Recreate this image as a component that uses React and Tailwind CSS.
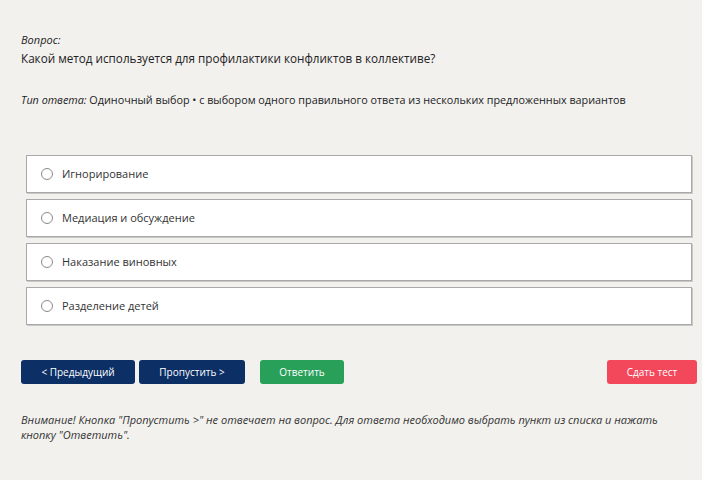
import React, { useState } from "react";

const options = [
  "Игнорирование",
  "Медиация и обсуждение",
  "Наказание виновных",
  "Разделение детей",
];

const App = () => {
  const [selected, setSelected] = useState(null);

  return (
    <div
      className="min-h-screen w-full bg-[#f2f1ee] text-[#222] pl-[21px] pr-[5px] pt-[33px]"
      style={{ fontFamily: '"Open Sans", "Noto Sans", sans-serif' }}
    >
      {/* Question */}
      <div className="text-[11px] italic leading-[14px]">Вопрос:</div>
      <div className="text-[11.7px] leading-[18px] mt-[2px]">
        Какой метод используется для профилактики конфликтов в коллективе?
      </div>

      <div className="text-[10.8px] leading-[14px] mt-[26px]">
        <span className="italic">Тип ответа:</span> Одиночный выбор • с выбором одного правильного ответа из нескольких предложенных вариантов
      </div>

      {/* Options */}
      <div className="flex flex-col gap-[6px] mt-[48px] ml-[5px] mr-[5px]">
        {options.map((opt, i) => (
          <label
            key={i}
            className="flex items-center h-[38px] bg-white border border-[#a9a9a9] shadow-[1px_1px_0_#c8c8c8] pl-[14px] cursor-pointer"
            onClick={() => setSelected(i)}
          >
            <span className="w-[12px] h-[12px] rounded-full border border-[#8a8a8a] bg-white flex items-center justify-center">
              {selected === i && <span className="w-[6px] h-[6px] rounded-full bg-[#333]" />}
            </span>
            <span className="ml-[9px] text-[11px] text-[#333]">{opt}</span>
          </label>
        ))}
      </div>

      {/* Buttons */}
      <div className="flex items-center mt-[35px]">
        <button className="w-[114px] h-[24px] rounded-[3px] bg-[#0c2f66] text-white text-[10px]">
          &lt; Предыдущий
        </button>
        <button className="w-[106px] h-[24px] rounded-[3px] bg-[#0c2f66] text-white text-[10px] ml-[4px]">
          Пропустить &gt;
        </button>
        <button className="w-[84px] h-[24px] rounded-[3px] bg-[#28a05a] text-white text-[10px] ml-[15px]">
          Ответить
        </button>
        <button className="w-[90px] h-[24px] rounded-[3px] bg-[#f3475c] text-white text-[10px] ml-auto">
          Сдать тест
        </button>
      </div>

      <p className="text-[11px] italic leading-[15px] text-[#333] mt-[28px] max-w-[665px]">
        Внимание! Кнопка "Пропустить &gt;" не отвечает на вопрос. Для ответа необходимо выбрать пункт из списка и нажать кнопку "Ответить".
      </p>
    </div>
  );
};

export default App;
